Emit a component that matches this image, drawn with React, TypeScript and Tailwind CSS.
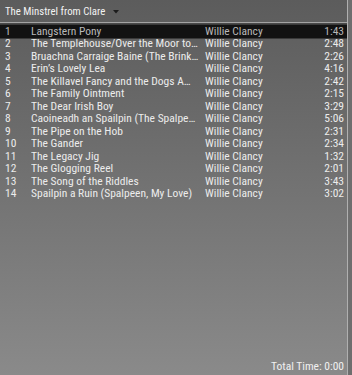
import { useState } from 'react';

const tracks = [
  { n: 1, title: 'Langstern Pony', artist: 'Willie Clancy', time: '1:43' },
  { n: 2, title: 'The Templehouse/Over the Moor to Maggie', artist: 'Willie Clancy', time: '2:48' },
  { n: 3, title: 'Bruachna Carraige Baine (The Brink of the White Rock)', artist: 'Willie Clancy', time: '2:26' },
  { n: 4, title: 'Erin\u2019s Lovely Lea', artist: 'Willie Clancy', time: '4:16' },
  { n: 5, title: 'The Killavel Fancy and the Dogs Among the Bushes', artist: 'Willie Clancy', time: '2:42' },
  { n: 6, title: 'The Family Ointment', artist: 'Willie Clancy', time: '2:15' },
  { n: 7, title: 'The Dear Irish Boy', artist: 'Willie Clancy', time: '3:29' },
  { n: 8, title: 'Caoineadh an Spailpin (The Spalpeen\u2019s Lament)', artist: 'Willie Clancy', time: '5:06' },
  { n: 9, title: 'The Pipe on the Hob', artist: 'Willie Clancy', time: '2:31' },
  { n: 10, title: 'The Gander', artist: 'Willie Clancy', time: '2:34' },
  { n: 11, title: 'The Legacy Jig', artist: 'Willie Clancy', time: '1:32' },
  { n: 12, title: 'The Glogging Reel', artist: 'Willie Clancy', time: '2:01' },
  { n: 13, title: 'The Song of the Riddles', artist: 'Willie Clancy', time: '3:43' },
  { n: 14, title: 'Spailpin a Ruin (Spalpeen, My Love)', artist: 'Willie Clancy', time: '3:02' },
];

export default function App() {
  const [selected, setSelected] = useState(1);

  return (
    <div
      className="w-[352px] h-[375px] flex bg-gradient-to-b from-[#5c5c5c] to-[#8a8a8a] text-[11.5px] leading-[13px] text-[#ececec] select-none overflow-hidden"
      style={{ fontFamily: '"Liberation Sans Narrow", "Roboto Condensed", "Liberation Sans", Arial, sans-serif' }}
    >
      <div className="flex-1 flex flex-col">
        {/* album header */}
        <div className="h-[22px] flex items-center pl-[5px] text-[10.8px] text-[#f2f2f2]">
          <span>The Minstrel from Clare</span>
          <svg className="ml-[8px] mt-[2px]" width="6" height="4" viewBox="0 0 6 4">
            <path d="M0 0 H6 L3 3.5 Z" fill="#1c1c1c" />
          </svg>
        </div>
        <div className="h-px bg-[#a4a4a4]" />
        <div className="h-[2px] bg-[#4a4a4a]" />

        {/* track list */}
        <div className="flex flex-col">
          {tracks.map((t) => {
            const isSel = t.n === selected;
            return (
              <div
                key={t.n}
                onClick={() => setSelected(t.n)}
                className={
                  isSel
                    ? 'h-[12.5px] flex items-center bg-[#121212] text-[#b8b8b8] outline outline-1 outline-[#3a3a3a]'
                    : 'h-[12.5px] flex items-center'
                }
              >
                <span className="w-[31px] pl-[5px]">{t.n}</span>
                <span className="w-[168px] truncate">{t.title}</span>
                <span className="ml-[6px] flex-1">{t.artist}</span>
                <span className="pr-[3px]">{t.time}</span>
              </div>
            );
          })}
        </div>

        <div className="flex-1" />

        {/* footer */}
        <div className="h-[18px] flex items-center justify-end pr-[3px] text-[#f0f0f0]">
          Total Time: 0:00
        </div>
      </div>
      <div className="w-px bg-[#b0b0b0]" />
      <div className="w-[4px] bg-[#6e6e6e]" />
    </div>
  );
}
